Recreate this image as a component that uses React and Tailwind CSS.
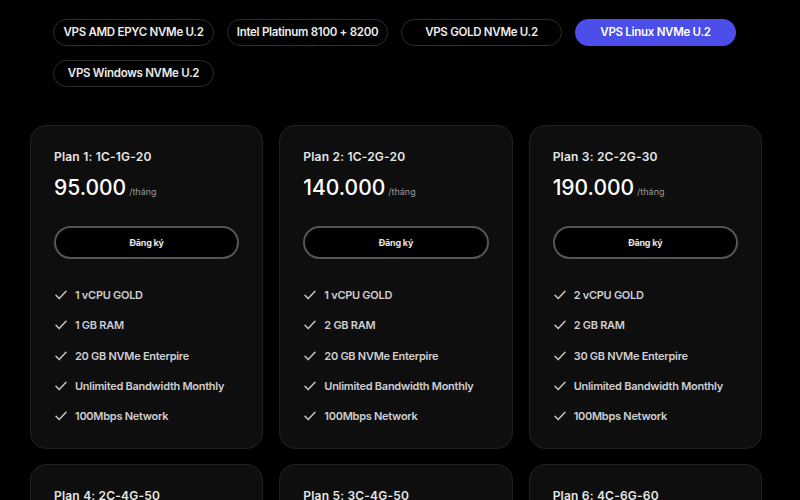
import React from "react";

const tabs = [
  "VPS AMD EPYC NVMe U.2",
  "Intel Platinum 8100 + 8200",
  "VPS GOLD NVMe U.2",
  "VPS Linux NVMe U.2",
  "VPS Windows NVMe U.2",
];

const plans = [
  { name: "Plan 1: 1C-1G-20", price: "95.000", cpu: "1 vCPU GOLD", ram: "1 GB RAM", disk: "20 GB NVMe Enterpire" },
  { name: "Plan 2: 1C-2G-20", price: "140.000", cpu: "1 vCPU GOLD", ram: "2 GB RAM", disk: "20 GB NVMe Enterpire" },
  { name: "Plan 3: 2C-2G-30", price: "190.000", cpu: "2 vCPU GOLD", ram: "2 GB RAM", disk: "30 GB NVMe Enterpire" },
  { name: "Plan 4: 2C-4G-50", price: "250.000", cpu: "2 vCPU GOLD", ram: "4 GB RAM", disk: "50 GB NVMe Enterpire" },
  { name: "Plan 5: 3C-4G-50", price: "300.000", cpu: "3 vCPU GOLD", ram: "4 GB RAM", disk: "50 GB NVMe Enterpire" },
  { name: "Plan 6: 4C-6G-60", price: "400.000", cpu: "4 vCPU GOLD", ram: "6 GB RAM", disk: "60 GB NVMe Enterpire" },
];

const Check = () => (
  <svg width="12" height="10" viewBox="0 0 12 10" fill="none" className="shrink-0">
    <path d="M1 5.2 L4.2 8.6 L11 1.2" stroke="#c4c4c4" strokeWidth="1.5" strokeLinecap="round" strokeLinejoin="round" />
  </svg>
);

const PlanCard = ({ plan }) => {
  const features = [plan.cpu, plan.ram, plan.disk, "Unlimited Bandwidth Monthly", "100Mbps Network"];
  return (
    <div className="rounded-[16px] border border-[#1e2226] bg-[#0e0e0f] px-[23px] pt-[24px] pb-[25px]">
      <div className="text-[12px] font-semibold text-[#e6e6e6] leading-[14px] tracking-[0.2px]">{plan.name}</div>
      <div className="mt-[11px] flex items-baseline gap-[3px]">
        <span className="text-[21px] font-medium text-white leading-[26px]">{plan.price}</span>
        <span className="text-[9px] text-[#9a9a9a]">/tháng</span>
      </div>
      <button className="mt-[25px] h-[33px] w-full rounded-full border-2 border-[#555555] bg-black text-[9px] font-bold text-[#e6e6e6] tracking-tight">
        Đăng ký
      </button>
      <ul className="mt-[29px] flex flex-col gap-[16.3px]">
        {features.map((f) => (
          <li key={f} className="flex items-center gap-[8px] pl-[1px] text-[11px] font-semibold text-[#cfcfcf] leading-[14px] tracking-tight">
            <Check />
            <span>{f}</span>
          </li>
        ))}
      </ul>
    </div>
  );
};

export default function App() {
  return (
    <div className="h-[500px] w-[800px] overflow-hidden bg-black font-['Inter',sans-serif]">
      <div className="pl-[53px] pt-[19px]">
        <div className="grid grid-cols-[repeat(4,161px)] gap-x-[13px] gap-y-[14px]">
          {tabs.map((t, i) => (
            <div
              key={t}
              className={
                i === 3
                  ? "flex h-[27px] items-center justify-center rounded-full bg-[#4b4ee8] text-[11.5px] font-semibold text-white tracking-tight"
                  : "flex h-[27px] items-center justify-center rounded-full border border-[#2a2d31] bg-black text-[11.5px] font-semibold text-[#ececec] tracking-tight"
              }
            >
              {t}
            </div>
          ))}
        </div>
      </div>
      <div className="ml-[30px] mt-[38px] grid w-[732px] grid-cols-3 gap-x-[16px] gap-y-[15px]">
        {plans.map((p) => (
          <PlanCard key={p.name} plan={p} />
        ))}
      </div>
    </div>
  );
}
